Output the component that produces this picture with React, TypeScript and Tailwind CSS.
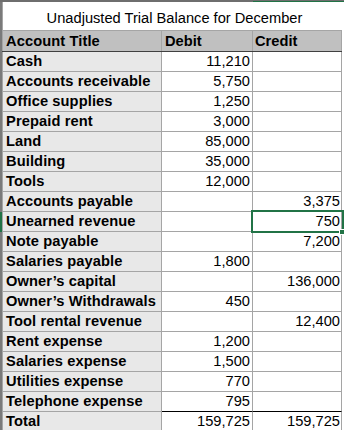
import React from "react";

type Row = { title: string; debit?: string; credit?: string };

const rows: Row[] = [
  { title: "Cash", debit: "11,210" },
  { title: "Accounts receivable", debit: "5,750" },
  { title: "Office supplies", debit: "1,250" },
  { title: "Prepaid rent", debit: "3,000" },
  { title: "Land", debit: "85,000" },
  { title: "Building", debit: "35,000" },
  { title: "Tools", debit: "12,000" },
  { title: "Accounts payable", credit: "3,375" },
  { title: "Unearned revenue", credit: "750" },
  { title: "Note payable", credit: "7,200" },
  { title: "Salaries payable", debit: "1,800" },
  { title: "Owner’s capital", credit: "136,000" },
  { title: "Owner’s Withdrawals", debit: "450" },
  { title: "Tool rental revenue", credit: "12,400" },
  { title: "Rent expense", debit: "1,200" },
  { title: "Salaries expense", debit: "1,500" },
  { title: "Utilities expense", debit: "770" },
  { title: "Telephone expense", debit: "795" },
  { title: "Total", debit: "159,725", credit: "159,725" },
];

export default function App() {
  return (
    <div className="relative w-[344px] h-[430px] overflow-hidden bg-white text-black font-['Liberation_Sans',Arial,sans-serif] text-[14.67px] leading-[17px]">
      {/* top strip (column headers cut off) */}
      <div className="flex h-[2px]">
        <div className="w-[253px] bg-[#6e6e6e]" />
        <div className="flex-1 flex flex-col">
          <div className="h-px bg-[#6e6e6e]" />
          <div className="h-px bg-[#217346]" />
        </div>
      </div>

      {/* title row */}
      <div className="flex h-[29px]">
        <div className="w-[2px] bg-[#7a7a7a]" />
        <div className="w-[340px] flex items-end justify-center pb-[3px] border-l border-b border-[#a5a5a5] pl-[4px]">
          Unadjusted Trial Balance for December
        </div>
      </div>

      {/* header row */}
      <div className="flex h-[21px]">
        <div className="w-[2px] bg-[#7a7a7a]" />
        <div className="w-[340px] flex bg-[#c0c0c0] border-b border-[#404040]">
          <div className="w-[160px] border-l border-r border-[#a5a5a5] flex items-end pb-[1px] pl-[3px] font-bold tracking-[0.1px]">
            Account Title
          </div>
          <div className="w-[91px] border-r border-[#a5a5a5] flex items-end pb-[1px] pl-[3px] font-bold">
            Debit
          </div>
          <div className="w-[89px] border-r border-[#a5a5a5] flex items-end pb-[1px] pl-[2px] font-bold">
            Credit
          </div>
        </div>
      </div>

      {/* data rows */}
      {rows.map((r, i) => {
        const selected = r.title === "Unearned revenue";
        const beforeTotal = i === rows.length - 2;
        return (
          <div key={r.title} className="flex h-[20px]">
            <div className={selected ? "w-[2px] bg-[#217346]" : "w-[2px] bg-[#7a7a7a]"} />
            <div className="w-[160px] bg-[#e8e8e8] border-l border-r border-b border-[#a5a5a5] flex items-end pb-[1px] pl-[3px] font-bold tracking-[0.1px] whitespace-nowrap">
              {r.title}
            </div>
            <div
              className={
                beforeTotal
                  ? "w-[91px] border-r border-[#a5a5a5] border-b border-b-black flex items-end justify-end pb-[1px] pr-[2px]"
                  : "w-[91px] border-r border-b border-[#a5a5a5] flex items-end justify-end pb-[1px] pr-[2px]"
              }
            >
              {r.debit ?? ""}
            </div>
            <div
              className={
                beforeTotal
                  ? "w-[89px] border-r border-[#a5a5a5] border-b border-b-black flex items-end justify-end pb-[1px] pr-[1px]"
                  : "w-[89px] border-r border-b border-[#a5a5a5] flex items-end justify-end pb-[1px] pr-[1px]"
              }
            >
              {r.credit ?? ""}
            </div>
          </div>
        );
      })}

      {/* selected cell outline */}
      <div className="absolute left-[251px] top-[210px] w-[93px] h-[23px] border-2 border-[#217346]" />
      <div className="absolute left-[339px] top-[229px] w-[6px] h-[6px] bg-[#217346] border border-white" />
    </div>
  );
}
